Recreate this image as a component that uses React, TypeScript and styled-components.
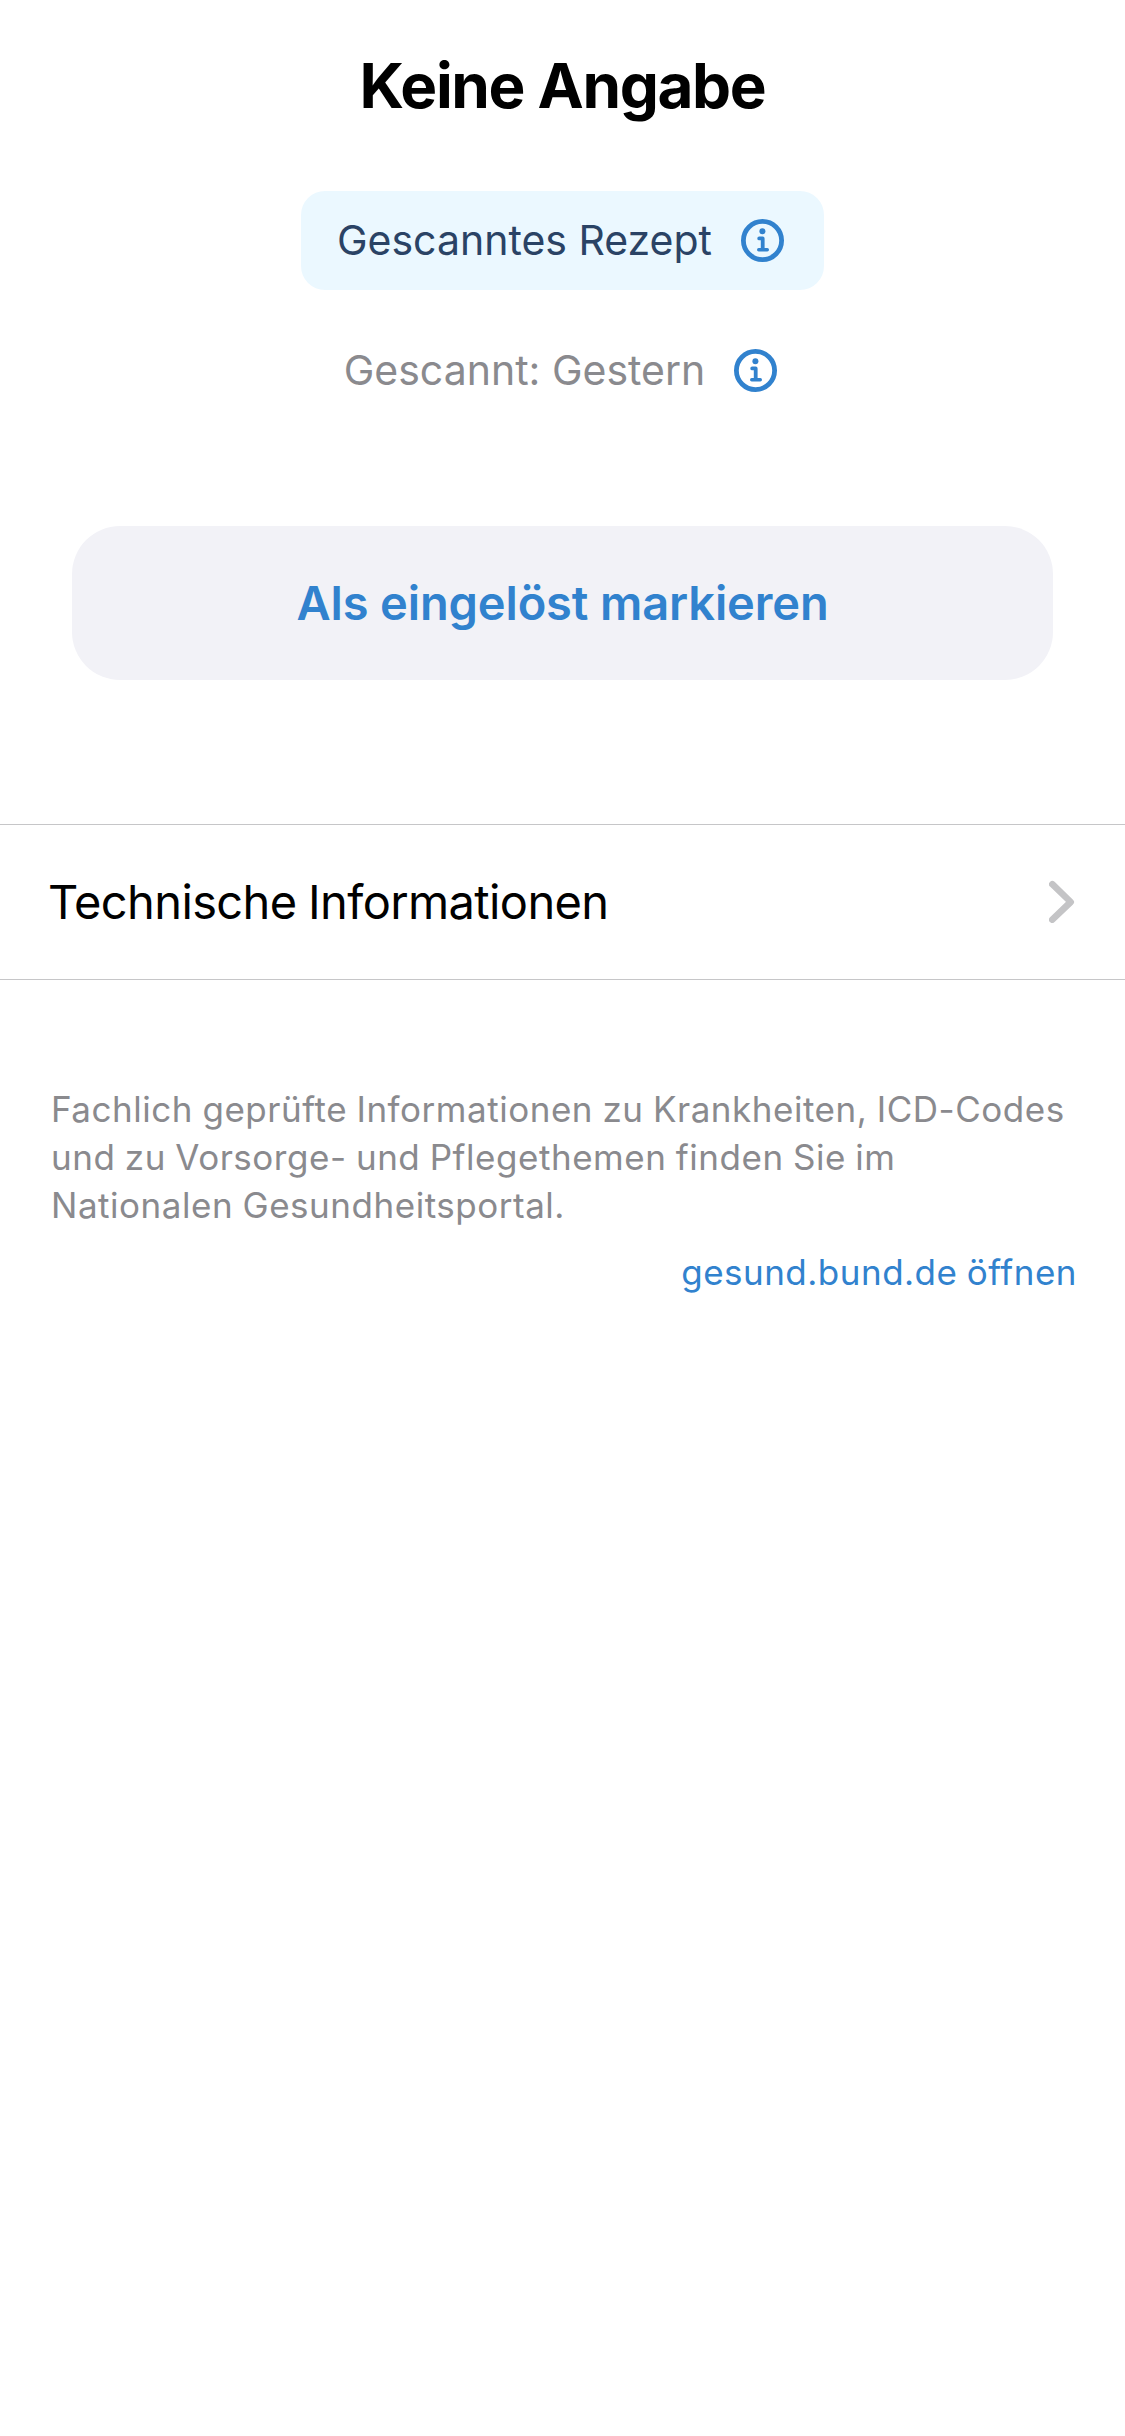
import React from 'react';
import styled, { createGlobalStyle } from 'styled-components';

const color = {
  primary: '#3182ce',
  badgeText: '#2a4365',
  badgeBackground: '#ebf8ff',
  secondary: '#8a8a8e',
  fill: '#f2f2f7',
  separator: '#c6c6c8',
  chevron: '#c4c4c6',
};

const GlobalStyle = createGlobalStyle`
  * { box-sizing: border-box; }
  body {
    margin: 0;
    background: #fff;
    color: #000;
    font-family: Inter, Roboto, sans-serif;
  }
`;

const Screen = styled.main`
  display: flex;
  flex-direction: column;
  align-items: center;
  width: 100%;
  min-height: 2436px;
  padding-top: 46px;
  background: #fff;
`;

const Title = styled.h1`
  margin: 0;
  font-size: 62px;
  line-height: 79px;
  font-weight: 700;
  letter-spacing: -1.36px;
`;

const Badge = styled.button`
  display: flex;
  align-items: center;
  gap: 29px;
  height: 99px;
  margin: 66px 0 0;
  padding: 0 40px 0 36px;
  border: 0;
  border-radius: 24px;
  background: ${color.badgeBackground};
  color: ${color.badgeText};
  font: inherit;
  font-size: 41px;
  line-height: 51px;
`;

const ScanDate = styled.div`
  display: flex;
  align-items: center;
  gap: 29px;
  height: 51px;
  margin-top: 55px;
  padding-right: 4px;
  color: ${color.secondary};
  font-size: 41px;
  line-height: 51px;
`;

const RedeemButton = styled.button`
  width: 981px;
  height: 154px;
  margin: 130px 0 0;
  padding: 0 0 2px;
  border: 0;
  border-radius: 48px;
  background: ${color.fill};
  color: ${color.primary};
  font: inherit;
  font-size: 47px;
  line-height: 57px;
  font-weight: 600;
  letter-spacing: -0.13px;
`;

const NavigationRow = styled.a`
  display: flex;
  align-items: center;
  justify-content: space-between;
  align-self: stretch;
  height: 156px;
  margin-top: 144px;
  padding: 0 50px 1px 48px;
  border: solid ${color.separator};
  border-width: 1px 0;
  font-size: 47px;
  line-height: 57px;
  letter-spacing: -0.62px;
  word-spacing: -1px;
`;

const Footer = styled.footer`
  display: flex;
  flex-direction: column;
  align-self: stretch;
  gap: 19px;
  padding: 105px 48px 0 51px;
  font-size: 35px;
  line-height: 48px;
  letter-spacing: 0.53px;
  word-spacing: -1px;
`;

const FooterText = styled.p`
  margin: 0;
  color: ${color.secondary};
`;

const FooterLink = styled.a`
  align-self: flex-end;
  color: ${color.primary};
  letter-spacing: 0.49px;
`;

const Icon = styled.svg`
  display: block;
  flex: none;
`;

const InfoIcon = () => (
  <Icon width="43" height="43" viewBox="0 0 43 43" fill="none" stroke={color.primary}>
    <circle cx="21.5" cy="21.5" r="19.1" strokeWidth="4.8" />
    <circle cx="21.4" cy="12.2" r="3" fill={color.primary} stroke="none" />
    <path d="M18.2 19.4h3.5v10.6" strokeWidth="3.8" strokeLinecap="round" strokeLinejoin="round" />
    <path d="M17.7 30.7h8.6" strokeWidth="3.4" strokeLinecap="round" />
  </Icon>
);

const ChevronIcon = () => (
  <Icon width="26" height="43" viewBox="0 0 26 43" fill="none" stroke={color.chevron}>
    <path d="M3.3 4.2 21.7 22 3.3 39.7" strokeWidth="6.6" strokeLinecap="round" strokeLinejoin="round" />
  </Icon>
);

export default function App() {
  return (
    <>
      <GlobalStyle />
      <Screen>
        <Title>Keine Angabe</Title>
        <Badge>
          <span>Gescanntes Rezept</span>
          <InfoIcon />
        </Badge>
        <ScanDate>
          <span>Gescannt: Gestern</span>
          <InfoIcon />
        </ScanDate>
        <RedeemButton>Als eingelöst markieren</RedeemButton>
        <NavigationRow>
          <span>Technische Informationen</span>
          <ChevronIcon />
        </NavigationRow>
        <Footer>
          <FooterText>
            Fachlich geprüfte Informationen zu Krankheiten, ICD-Codes und zu Vorsorge- und
            Pflegethemen finden Sie im Nationalen Gesundheitsportal.
          </FooterText>
          <FooterLink>gesund.bund.de öffnen</FooterLink>
        </Footer>
      </Screen>
    </>
  );
}
